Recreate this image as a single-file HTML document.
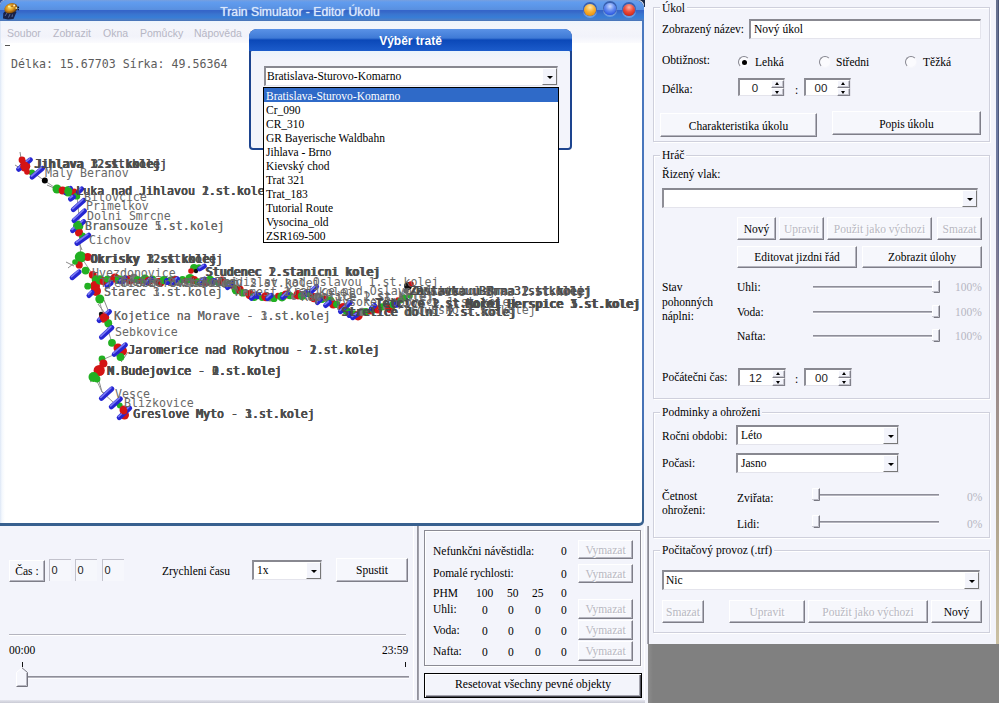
<!DOCTYPE html>
<html><head><meta charset="utf-8"><title>Train Simulator - Editor Úkolu</title>
<style>
*{box-sizing:border-box;margin:0;padding:0}
html,body{width:999px;height:703px;overflow:hidden;background:#f3f4fb}
body{position:relative;font-family:"Liberation Serif",serif;font-size:11.5px;color:#000}
.a{position:absolute;white-space:nowrap}
.t{position:absolute;white-space:nowrap;line-height:14px;height:14px}
.sans{font-family:"Liberation Sans",sans-serif}
.mono{font-family:"DejaVu Sans Mono","Liberation Mono",monospace}
.fs{position:absolute;border:1px solid #cfd0dc;box-shadow:inset 1px 1px 0 #fff, 1px 1px 0 #fff}
.lg{position:absolute;background:#f3f4fb;padding:0 2px;line-height:14px;height:14px;white-space:nowrap}
.btn{position:absolute;border-right:1px solid #7e7e88;border-bottom:1px solid #7e7e88;border-top:1px solid #fff;border-left:1px solid #fff;box-shadow:inset -1px -1px 0 #b4b4be;background:#f6f7fc;text-align:center;white-space:nowrap}
.btn.dis{color:#b8b8c2;text-shadow:1px 1px 0 #fff}
.inp{position:absolute;background:#fff;border-top:2px solid #888890;border-left:2px solid #8e8e96;border-right:1px solid #e4e4ec;border-bottom:1px solid #e4e4ec;white-space:nowrap}
.dd{position:absolute;width:15px;background:#f3f4fb;border-top:1px solid #fff;border-left:1px solid #fff;border-right:1px solid #777;border-bottom:1px solid #777}
.dd:after{content:"";position:absolute;left:4px;top:7px;border:3px solid transparent;border-top:3px solid #000;border-bottom:none}
.gray{color:#b6b6c2}
.lb{font-family:"DejaVu Sans Mono","Liberation Mono",monospace;font-size:11.6px;line-height:14px;color:#686868}
.lb.bb{color:#4c4c4c;text-shadow:0.6px 0 0 #4c4c4c}
</style></head><body>
<div class="a" style="left:644px;top:0;width:355px;height:644px;background:#f3f4fb"></div>
<div class="a" style="left:648px;top:644px;width:351px;height:59px;background:linear-gradient(90deg,#8c8c8c 0,#808080 5px)"></div>
<div class="a" style="left:996px;top:0;width:3px;height:644px;background:linear-gradient(#66708e,#6c7aa2 20%,#807c94 42%,#96868c 55%,#b0a48e 80%,#cbc1a4)"></div>
<div class="a" style="left:998px;top:0;width:1px;height:300px;background:linear-gradient(#4a5474,#4e5a80 60%,rgba(120,110,130,0))"></div>
<div class="fs" style="left:653px;top:7px;width:337px;height:135px"></div>
<div class="lg" style="left:660px;top:1px">Úkol</div>
<div class="t " style="left:662px;top:22px;">Zobrazený název:</div>
<div class="inp" style="left:749px;top:19px;width:232px;height:20px;line-height:17px;padding-left:3px;">Nový úkol</div>
<div class="t " style="left:662px;top:53px;">Obtižnost:</div>
<div class="a" style="left:738px;top:56px;width:12px;height:12px;border-radius:50%;background:#fbfbfe;border:1px solid #85858f;border-right-color:#f6f6fb;border-bottom-color:#f6f6fb;transform:rotate(0deg)"></div>
<div class="a" style="left:741.5px;top:59.5px;width:5px;height:5px;border-radius:50%;background:#000"></div>
<div class="t " style="left:755px;top:55px;">Lehká</div>
<div class="a" style="left:819px;top:56px;width:12px;height:12px;border-radius:50%;background:#fbfbfe;border:1px solid #85858f;border-right-color:#f6f6fb;border-bottom-color:#f6f6fb;transform:rotate(0deg)"></div>
<div class="t " style="left:836px;top:55px;">Středni</div>
<div class="a" style="left:905px;top:56px;width:12px;height:12px;border-radius:50%;background:#fbfbfe;border:1px solid #85858f;border-right-color:#f6f6fb;border-bottom-color:#f6f6fb;transform:rotate(0deg)"></div>
<div class="t " style="left:923px;top:55px;">Těžká</div>
<div class="t " style="left:662px;top:82px;">Délka:</div>
<div class="inp sans" style="left:738px;top:78px;width:47px;height:18px;line-height:16px;text-align:center;padding-right:14px;font-size:11.5px;color:#222">0</div>
<div class="a" style="left:771px;top:80px;width:13px;height:8px;background:#f3f4fb;border-right:1px solid #80808a;border-bottom:1px solid #80808a;border-top:1px solid #fff;border-left:1px solid #fff;box-shadow:inset -1px -1px 0 #c4c4cc"></div>
<div class="a" style="left:775px;top:82px;border:2.5px solid transparent;border-bottom:3px solid #000;border-top:none"></div>
<div class="a" style="left:771px;top:88px;width:13px;height:8px;background:#f3f4fb;border-right:1px solid #80808a;border-bottom:1px solid #80808a;border-top:1px solid #fff;border-left:1px solid #fff;box-shadow:inset -1px -1px 0 #c4c4cc"></div>
<div class="a" style="left:775px;top:91px;border:2.5px solid transparent;border-top:3px solid #000;border-bottom:none"></div>
<div class="t " style="left:795px;top:83px;">:</div>
<div class="inp sans" style="left:804px;top:78px;width:47px;height:18px;line-height:16px;text-align:center;padding-right:14px;font-size:11.5px;color:#222">00</div>
<div class="a" style="left:837px;top:80px;width:13px;height:8px;background:#f3f4fb;border-right:1px solid #80808a;border-bottom:1px solid #80808a;border-top:1px solid #fff;border-left:1px solid #fff;box-shadow:inset -1px -1px 0 #c4c4cc"></div>
<div class="a" style="left:841px;top:82px;border:2.5px solid transparent;border-bottom:3px solid #000;border-top:none"></div>
<div class="a" style="left:837px;top:88px;width:13px;height:8px;background:#f3f4fb;border-right:1px solid #80808a;border-bottom:1px solid #80808a;border-top:1px solid #fff;border-left:1px solid #fff;box-shadow:inset -1px -1px 0 #c4c4cc"></div>
<div class="a" style="left:841px;top:91px;border:2.5px solid transparent;border-top:3px solid #000;border-bottom:none"></div>
<div class="btn" style="left:660px;top:113px;width:157px;height:24px;line-height:23px;line-height:24px;">Charakteristika úkolu</div>
<div class="btn" style="left:832px;top:111px;width:149px;height:24px;line-height:23px;line-height:24px;">Popis úkolu</div>
<div class="fs" style="left:653px;top:155px;width:337px;height:244px"></div>
<div class="lg" style="left:660px;top:148px">Hráč</div>
<div class="t " style="left:662px;top:167px;">Řizený vlak:</div>
<div class="inp" style="left:662px;top:188px;width:316px;height:20px;line-height:17px;padding-left:3px;"></div>
<div class="dd" style="left:962px;top:190px;height:17px"></div>
<div class="btn" style="left:737px;top:217px;width:39px;height:23px;line-height:22px;">Nový</div>
<div class="btn dis" style="left:779px;top:217px;width:45px;height:23px;line-height:22px;">Upravit</div>
<div class="btn dis" style="left:827px;top:217px;width:105px;height:23px;line-height:22px;">Použit jako výchozi</div>
<div class="btn dis" style="left:937px;top:217px;width:45px;height:23px;line-height:22px;">Smazat</div>
<div class="btn" style="left:737px;top:246px;width:120px;height:22px;line-height:21px;">Editovat jizdni řád</div>
<div class="btn" style="left:862px;top:246px;width:120px;height:22px;line-height:21px;">Zobrazit úlohy</div>
<div class="t " style="left:662px;top:280px;">Stav</div>
<div class="t " style="left:662px;top:295px;">pohonných</div>
<div class="t " style="left:662px;top:309px;">náplni:</div>
<div class="t " style="left:737px;top:280px;">Uhli:</div>
<div class="a" style="left:813px;top:286px;width:120px;height:2px;background:linear-gradient(#8e8e98 0,#8e8e98 1px,#b4b4be 1px);border-bottom:1px solid #fdfdff;box-sizing:content-box"></div>
<svg class="a" style="left:932px;top:280px" width="9" height="15" viewBox="0 0 9 15"><path d="M0.5 0.5 H7.5 V12.5 H2 L0.5 11 Z" fill="#f5f6fc"/><path d="M0.5 11 V0.5 H7.5" fill="none" stroke="#fff"/><path d="M6.5 1 V11.5 H2" fill="none" stroke="#b8b8c2"/><path d="M7.5 0.5 V12.5 H2 L0.8 11.3" fill="none" stroke="#787882"/></svg>
<div class="t gray" style="left:955px;top:280px;">100%</div>
<div class="t " style="left:737px;top:305px;">Voda:</div>
<div class="a" style="left:813px;top:311px;width:120px;height:2px;background:linear-gradient(#8e8e98 0,#8e8e98 1px,#b4b4be 1px);border-bottom:1px solid #fdfdff;box-sizing:content-box"></div>
<svg class="a" style="left:932px;top:305px" width="9" height="15" viewBox="0 0 9 15"><path d="M0.5 0.5 H7.5 V12.5 H2 L0.5 11 Z" fill="#f5f6fc"/><path d="M0.5 11 V0.5 H7.5" fill="none" stroke="#fff"/><path d="M6.5 1 V11.5 H2" fill="none" stroke="#b8b8c2"/><path d="M7.5 0.5 V12.5 H2 L0.8 11.3" fill="none" stroke="#787882"/></svg>
<div class="t gray" style="left:955px;top:305px;">100%</div>
<div class="t " style="left:737px;top:329px;">Nafta:</div>
<div class="a" style="left:813px;top:335px;width:120px;height:2px;background:linear-gradient(#8e8e98 0,#8e8e98 1px,#b4b4be 1px);border-bottom:1px solid #fdfdff;box-sizing:content-box"></div>
<svg class="a" style="left:932px;top:329px" width="9" height="15" viewBox="0 0 9 15"><path d="M0.5 0.5 H7.5 V12.5 H2 L0.5 11 Z" fill="#f5f6fc"/><path d="M0.5 11 V0.5 H7.5" fill="none" stroke="#fff"/><path d="M6.5 1 V11.5 H2" fill="none" stroke="#b8b8c2"/><path d="M7.5 0.5 V12.5 H2 L0.8 11.3" fill="none" stroke="#787882"/></svg>
<div class="t gray" style="left:955px;top:329px;">100%</div>
<div class="t " style="left:662px;top:370px;">Počátečni čas:</div>
<div class="inp sans" style="left:738px;top:368px;width:48px;height:18px;line-height:16px;text-align:center;padding-right:14px;font-size:11.5px;color:#222">12</div>
<div class="a" style="left:772px;top:370px;width:13px;height:8px;background:#f3f4fb;border-right:1px solid #80808a;border-bottom:1px solid #80808a;border-top:1px solid #fff;border-left:1px solid #fff;box-shadow:inset -1px -1px 0 #c4c4cc"></div>
<div class="a" style="left:776px;top:372px;border:2.5px solid transparent;border-bottom:3px solid #000;border-top:none"></div>
<div class="a" style="left:772px;top:378px;width:13px;height:8px;background:#f3f4fb;border-right:1px solid #80808a;border-bottom:1px solid #80808a;border-top:1px solid #fff;border-left:1px solid #fff;box-shadow:inset -1px -1px 0 #c4c4cc"></div>
<div class="a" style="left:776px;top:381px;border:2.5px solid transparent;border-top:3px solid #000;border-bottom:none"></div>
<div class="t " style="left:795px;top:372px;">:</div>
<div class="inp sans" style="left:804px;top:368px;width:48px;height:18px;line-height:16px;text-align:center;padding-right:14px;font-size:11.5px;color:#222">00</div>
<div class="a" style="left:838px;top:370px;width:13px;height:8px;background:#f3f4fb;border-right:1px solid #80808a;border-bottom:1px solid #80808a;border-top:1px solid #fff;border-left:1px solid #fff;box-shadow:inset -1px -1px 0 #c4c4cc"></div>
<div class="a" style="left:842px;top:372px;border:2.5px solid transparent;border-bottom:3px solid #000;border-top:none"></div>
<div class="a" style="left:838px;top:378px;width:13px;height:8px;background:#f3f4fb;border-right:1px solid #80808a;border-bottom:1px solid #80808a;border-top:1px solid #fff;border-left:1px solid #fff;box-shadow:inset -1px -1px 0 #c4c4cc"></div>
<div class="a" style="left:842px;top:381px;border:2.5px solid transparent;border-top:3px solid #000;border-bottom:none"></div>
<div class="fs" style="left:653px;top:412px;width:337px;height:126px"></div>
<div class="lg" style="left:660px;top:405px">Podminky a ohroženi</div>
<div class="t " style="left:662px;top:429px;">Ročni obdobi:</div>
<div class="inp" style="left:736px;top:425px;width:163px;height:20px;line-height:17px;padding-left:3px;">Léto</div>
<div class="dd" style="left:883px;top:427px;height:17px"></div>
<div class="t " style="left:662px;top:456px;">Počasi:</div>
<div class="inp" style="left:736px;top:453px;width:163px;height:20px;line-height:17px;padding-left:3px;">Jasno</div>
<div class="dd" style="left:883px;top:455px;height:17px"></div>
<div class="t " style="left:662px;top:489px;">Četnost</div>
<div class="t " style="left:662px;top:503px;">ohroženi:</div>
<div class="t " style="left:737px;top:491px;">Zviřata:</div>
<div class="a" style="left:819px;top:494px;width:120px;height:2px;background:linear-gradient(#8e8e98 0,#8e8e98 1px,#b4b4be 1px);border-bottom:1px solid #fdfdff;box-sizing:content-box"></div>
<svg class="a" style="left:812px;top:488px" width="9" height="15" viewBox="0 0 9 15"><path d="M0.5 0.5 H7.5 V12.5 H2 L0.5 11 Z" fill="#f5f6fc"/><path d="M0.5 11 V0.5 H7.5" fill="none" stroke="#fff"/><path d="M6.5 1 V11.5 H2" fill="none" stroke="#b8b8c2"/><path d="M7.5 0.5 V12.5 H2 L0.8 11.3" fill="none" stroke="#787882"/></svg>
<div class="t gray" style="left:967px;top:490px;">0%</div>
<div class="t " style="left:737px;top:517px;">Lidi:</div>
<div class="a" style="left:819px;top:521px;width:120px;height:2px;background:linear-gradient(#8e8e98 0,#8e8e98 1px,#b4b4be 1px);border-bottom:1px solid #fdfdff;box-sizing:content-box"></div>
<svg class="a" style="left:812px;top:515px" width="9" height="15" viewBox="0 0 9 15"><path d="M0.5 0.5 H7.5 V12.5 H2 L0.5 11 Z" fill="#f5f6fc"/><path d="M0.5 11 V0.5 H7.5" fill="none" stroke="#fff"/><path d="M6.5 1 V11.5 H2" fill="none" stroke="#b8b8c2"/><path d="M7.5 0.5 V12.5 H2 L0.8 11.3" fill="none" stroke="#787882"/></svg>
<div class="t gray" style="left:967px;top:517px;">0%</div>
<div class="fs" style="left:653px;top:550px;width:337px;height:83px"></div>
<div class="lg" style="left:660px;top:543px">Počitačový provoz (.trf)</div>
<div class="inp" style="left:662px;top:570px;width:318px;height:20px;line-height:17px;padding-left:2px;">Nic</div>
<div class="dd" style="left:964px;top:572px;height:17px"></div>
<div class="btn dis" style="left:662px;top:600px;width:42px;height:23px;line-height:22px;">Smazat</div>
<div class="btn dis" style="left:729px;top:600px;width:76px;height:23px;line-height:22px;">Upravit</div>
<div class="btn dis" style="left:808px;top:600px;width:120px;height:23px;line-height:22px;">Použit jako výchozi</div>
<div class="btn" style="left:931px;top:600px;width:51px;height:23px;line-height:22px;">Nový</div>
<div class="a" style="left:0;top:525px;width:644px;height:178px;background:#f3f4fb"></div>
<div class="a" style="left:413px;top:526px;width:1px;height:177px;background:#fff"></div>
<div class="a" style="left:417px;top:526px;width:2px;height:177px;background:linear-gradient(90deg,#8a8a94,#a8a8b2)"></div>
<div class="a" style="left:647px;top:526px;width:2px;height:118px;background:linear-gradient(90deg,#b4b4be,#7c7c86)"></div>
<div class="a" style="left:644px;top:526px;width:1px;height:177px;background:#fff"></div>
<div class="btn" style="left:9px;top:560px;width:36px;height:22px;line-height:21px;">Čas :</div>
<div class="a sans" style="left:49px;top:559px;width:22px;height:22px;border-top:1px solid #c2c2cc;border-left:1px solid #c2c2cc;background:#f6f7fc;line-height:21px;padding-left:1.5px;font-size:11px;color:#222">0</div>
<div class="a sans" style="left:75px;top:559px;width:22px;height:22px;border-top:1px solid #c2c2cc;border-left:1px solid #c2c2cc;background:#f6f7fc;line-height:21px;padding-left:1.5px;font-size:11px;color:#222">0</div>
<div class="a sans" style="left:102px;top:559px;width:22px;height:22px;border-top:1px solid #c2c2cc;border-left:1px solid #c2c2cc;background:#f6f7fc;line-height:21px;padding-left:1.5px;font-size:11px;color:#222">0</div>
<div class="t " style="left:162px;top:564px;">Zrychleni času</div>
<div class="inp" style="left:252px;top:560px;width:70px;height:20px;line-height:17px;padding-left:3px;">1x</div>
<div class="dd" style="left:306px;top:562px;height:17px"></div>
<div class="btn" style="left:336px;top:558px;width:72px;height:24px;line-height:23px;">Spustit</div>
<div class="a" style="left:9px;top:634px;width:397px;height:1px;background:#b4b4be"></div><div class="a" style="left:9px;top:635px;width:397px;height:1px;background:#fff"></div>
<div class="t " style="left:9px;top:643px;">00:00</div>
<div class="t " style="left:382px;top:643px;">23:59</div>
<div class="a" style="left:22px;top:662px;width:1px;height:5px;background:#111"></div>
<div class="a" style="left:405px;top:662px;width:1px;height:5px;background:#111"></div>
<div class="a" style="left:22px;top:676px;width:387px;height:2px;background:linear-gradient(#8e8e98 0,#8e8e98 1px,#b4b4be 1px);border-bottom:1px solid #fdfdff;box-sizing:content-box"></div>
<svg class="a" style="left:16px;top:667px" width="13" height="21" viewBox="0 0 13 21"><path d="M0.5 19.5 V5.5 L6 0.8 L11.5 5.5 V19.5 Z" fill="#f5f6fc"/><path d="M0.5 19.5 V5.5 L6 0.8" fill="none" stroke="#fff"/><path d="M10.5 6 V18.5 H1.5" fill="none" stroke="#b8b8c2"/><path d="M6 0.8 L11.5 5.5 V19.5 H0.5" fill="none" stroke="#74747e"/></svg>
<div class="a" style="left:0;top:700px;width:645px;height:3px;background:linear-gradient(#e4e5ee,#c9cad4)"></div>
<div class="a" style="left:424px;top:530px;width:217px;height:136px;border:1px solid #8a8a94;box-shadow:inset 1px 1px 0 #fff,1px 1px 0 #fff"></div>
<div class="t " style="left:433px;top:544px;">Nefunkčni návěstidla:</div>
<div class="t " style="left:561px;top:544px;">0</div>
<div class="btn dis" style="left:578px;top:540px;width:55px;height:19px;line-height:18px;">Vymazat</div>
<div class="t " style="left:433px;top:566px;">Pomalé rychlosti:</div>
<div class="t " style="left:561px;top:567px;">0</div>
<div class="btn dis" style="left:578px;top:564px;width:55px;height:19px;line-height:18px;">Vymazat</div>
<div class="t " style="left:433px;top:586px;">PHM</div>
<div class="t " style="left:476px;top:586px;">100</div>
<div class="t " style="left:507px;top:586px;">50</div>
<div class="t " style="left:532px;top:586px;">25</div>
<div class="t " style="left:561px;top:586px;">0</div>
<div class="t " style="left:433px;top:602px;">Uhli:</div>
<div class="t " style="left:482px;top:603px;">0</div>
<div class="t " style="left:508px;top:603px;">0</div>
<div class="t " style="left:535px;top:603px;">0</div>
<div class="t " style="left:561px;top:603px;">0</div>
<div class="btn dis" style="left:578px;top:599px;width:55px;height:20px;line-height:19px;">Vymazat</div>
<div class="t " style="left:433px;top:623px;">Voda:</div>
<div class="t " style="left:482px;top:624px;">0</div>
<div class="t " style="left:508px;top:624px;">0</div>
<div class="t " style="left:535px;top:624px;">0</div>
<div class="t " style="left:561px;top:624px;">0</div>
<div class="btn dis" style="left:578px;top:620px;width:55px;height:20px;line-height:19px;">Vymazat</div>
<div class="t " style="left:433px;top:644px;">Nafta:</div>
<div class="t " style="left:482px;top:645px;">0</div>
<div class="t " style="left:508px;top:645px;">0</div>
<div class="t " style="left:535px;top:645px;">0</div>
<div class="t " style="left:561px;top:645px;">0</div>
<div class="btn dis" style="left:578px;top:641px;width:55px;height:20px;line-height:19px;">Vymazat</div>
<div class="a" style="left:424px;top:673px;width:218px;height:25px;border:1px solid #000;box-shadow:inset 1px 1px 0 #fff,inset -1px -1px 0 #4c4c56,inset -2px -2px 0 #a4a4ae;text-align:center;line-height:21px;font-size:11.7px">Resetovat všechny pevné objekty</div>
<div class="a" style="left:0;top:0;width:644px;height:526px;background:linear-gradient(#4a78c0,#4672b6 80%,#38608f 97%);border-radius:6px 8px 5px 0"></div>
<div class="a" style="left:0;top:43px;width:5px;height:480px;background:linear-gradient(90deg,#dde7f6,#f4f8fd 40%,#fff);z-index:1"></div>
<div class="a" style="left:0;top:20px;width:1px;height:23px;background:#dfe8f6"></div>
<div class="a" style="left:0;top:0;width:644px;height:21px;border-radius:7px 9px 0 0;background:linear-gradient(#789fdd 0,#619cee 2px,#5c96e8 6px,#5990e0 9.5px,#3565c9 10.5px,#3669c9 12px,#3a74cf 14px,#387dd6 17.5px,#4a7ec8 19.5px,#4a72b4 21px)"></div>
<div class="a sans" style="left:0;top:3.6px;width:600px;text-align:center;color:#dbe8fc;font-size:12.2px;line-height:16px;text-shadow:0 0 1px #dbe8fc">Train Simulator - Editor Úkolu</div>
<svg class="a" style="left:0;top:0" width="24" height="21" viewBox="0 0 24 21"><defs><radialGradient id="ig" cx="45%" cy="40%" r="60%"><stop offset="0" stop-color="#fae070"/><stop offset="0.45" stop-color="#e09a20"/><stop offset="0.85" stop-color="#8a5410"/><stop offset="1" stop-color="#3a2a18"/></radialGradient></defs><path d="M3 18.5 L3.3 13 L6 10.5 L13 10 L16.5 12 L15 15.5 L13.5 19 L8 19.5 Z" fill="#16183a" opacity=".9"/><path d="M5 16 L7 13 M8.5 17.5 L10 14 M12 17 L12.5 14.5" stroke="#6a7aa8" stroke-width=".8"/><ellipse cx="11" cy="8.3" rx="6.8" ry="5" transform="rotate(-18 11 8.3)" fill="url(#ig)"/><circle cx="9" cy="6.5" r="1.1" fill="#fff3a0"/><circle cx="14.2" cy="5.6" r="1" fill="#fff0c8"/><circle cx="16.3" cy="8" r=".9" fill="#f4e890"/><circle cx="18.3" cy="7.4" r=".8" fill="#101020"/><circle cx="18.2" cy="9.6" r=".8" fill="#101020"/><circle cx="12" cy="6.2" r=".7" fill="#7a3a10"/></svg>
<div class="a" style="left:584px;top:3.8000000000000007px;width:12px;height:12px;border-radius:50%;background:radial-gradient(circle at 50% 28%,#ffe6a8 0,#f8b030 45%,#e89010 80%);box-shadow:0 -1px 0 1px rgba(24,50,130,.55),0 1px 0 1px rgba(200,220,255,.35)"></div>
<div class="a" style="left:604px;top:3.3000000000000007px;width:12px;height:12px;border-radius:50%;background:radial-gradient(circle at 50% 28%,#c8d8fc 0,#6088f0 45%,#2c58e4 80%);box-shadow:0 -1px 0 1px rgba(24,50,130,.55),0 1px 0 1px rgba(200,220,255,.35)"></div>
<div class="a" style="left:623px;top:3.8000000000000007px;width:12px;height:12px;border-radius:50%;background:radial-gradient(circle at 50% 28%,#ffb0a0 0,#ec4a38 45%,#d02818 80%);box-shadow:0 -1px 0 1px rgba(24,50,130,.55),0 1px 0 1px rgba(200,220,255,.35)"></div>
<svg class="a" style="left:638px;top:0" width="7" height="7" viewBox="0 0 7 7"><path d="M0 0 H7 V7 H6 A6 6 0 0 0 0 0Z" fill="#1a2846"/></svg>
<svg class="a" style="left:0;top:0" width="5" height="5" viewBox="0 0 5 5"><path d="M0 0 H5 A5 5 0 0 0 0 5Z" fill="#2c4f9c"/></svg>
<div class="a" style="left:1px;top:21px;width:641px;height:22px;background:linear-gradient(#eef4fc,#f4f5fb 30%,#f2f3fa 70%,#fbfbfe)"></div>
<div class="a sans" style="left:7px;top:25.6px;font-size:10.5px;line-height:14px;color:#b6b6c4">Soubor</div>
<div class="a sans" style="left:53px;top:25.6px;font-size:10.5px;line-height:14px;color:#b6b6c4">Zobrazit</div>
<div class="a sans" style="left:103px;top:25.6px;font-size:10.5px;line-height:14px;color:#b6b6c4">Okna</div>
<div class="a sans" style="left:140px;top:25.6px;font-size:10.5px;line-height:14px;color:#b6b6c4">Pomůcky</div>
<div class="a sans" style="left:194px;top:25.6px;font-size:10.5px;line-height:14px;color:#b6b6c4">Nápověda</div>
<div class="a" style="left:1px;top:43px;width:641px;height:480px;background:#fff;border-radius:0 0 3px 0"></div>
<div class="a" style="left:3px;top:45px;width:7px;height:1px;background:#555"></div>
<div class="a mono" style="left:11px;top:57px;font-size:11.6px;line-height:14px;color:#5c5c5c;letter-spacing:0px">Délka: 15.67703 Sírka: 49.56364</div>
<div class="a" style="left:0;top:0;width:642px;height:523px;overflow:hidden">
<svg class="a" style="left:0;top:43px" width="641" height="480" viewBox="0 43 641 480">
<polyline fill="none" stroke="#9a9a9a" stroke-width="1" points="24,166 45,181 57,189 77,196 79,216 79,232 81,257 93,275 96,290 104,317 112,343 120,352 102,360 95,377 102,392 124,412"/>
<polyline fill="none" stroke="#9a9a9a" stroke-width="1" points="100,280 130,279 160,281 190,280 222,282 230,285 246,294 266,298 282,296 310,295 330,301 350,313 358,315 370,310 390,307 404,300"/>
<line x1="47" y1="185" x2="54" y2="188" stroke="#8a8a8a" stroke-width="1"/>
<line x1="20" y1="152" x2="21" y2="158" stroke="#8a8a8a" stroke-width="1"/>
<line x1="15" y1="165" x2="20" y2="168" stroke="#8a8a8a" stroke-width="1"/>
<line x1="78" y1="240" x2="82" y2="250" stroke="#8a8a8a" stroke-width="1"/>
<line x1="66" y1="262" x2="74" y2="266" stroke="#8a8a8a" stroke-width="1"/>
<line x1="68" y1="268" x2="73" y2="264" stroke="#8a8a8a" stroke-width="1"/>
<line x1="99" y1="381" x2="102" y2="392" stroke="#8a8a8a" stroke-width="1"/>
<line x1="102" y1="392" x2="106" y2="394" stroke="#8a8a8a" stroke-width="1"/>
<line x1="90" y1="382" x2="96" y2="378" stroke="#8a8a8a" stroke-width="1"/>
<line x1="113" y1="352" x2="122" y2="362" stroke="#8a8a8a" stroke-width="1"/>
<line x1="124" y1="358" x2="128" y2="352" stroke="#8a8a8a" stroke-width="1"/>
<line x1="104" y1="300" x2="108" y2="310" stroke="#8a8a8a" stroke-width="1"/>
<line x1="98" y1="304" x2="104" y2="312" stroke="#8a8a8a" stroke-width="1"/>
<circle cx="24.9" cy="166.3" r="5.4" fill="#d41414"/>
<circle cx="22.0" cy="160.0" r="3.4" fill="#d41414"/>
<circle cx="32.0" cy="172.7" r="3.1" fill="#22b022"/>
<circle cx="27.0" cy="172.0" r="2.8" fill="#d41414"/>
<circle cx="57.0" cy="189.0" r="4.5" fill="#22b022"/>
<circle cx="62.6" cy="190.5" r="3.9" fill="#d41414"/>
<circle cx="68.3" cy="191.2" r="5.2" fill="#22b022"/>
<circle cx="74.0" cy="192.0" r="3.4" fill="#d41414"/>
<circle cx="76.8" cy="196.2" r="3.4" fill="#22b022"/>
<circle cx="78.2" cy="226.0" r="5.2" fill="#22b022"/>
<circle cx="79.0" cy="232.5" r="4.0" fill="#d41414"/>
<circle cx="82.5" cy="236.0" r="3.4" fill="#22b022"/>
<circle cx="80.6" cy="257.0" r="5.8" fill="#22b022"/>
<circle cx="87.7" cy="257.0" r="3.9" fill="#d41414"/>
<circle cx="79.2" cy="264.9" r="3.6" fill="#d41414"/>
<circle cx="75.0" cy="262.0" r="2.8" fill="#22b022"/>
<circle cx="85.6" cy="270.6" r="3.9" fill="#22b022"/>
<circle cx="92.7" cy="274.8" r="3.9" fill="#d41414"/>
<circle cx="96.2" cy="279.8" r="4.5" fill="#22b022"/>
<circle cx="95.0" cy="286.0" r="5.0" fill="#d41414"/>
<circle cx="96.0" cy="291.0" r="5.0" fill="#d41414"/>
<circle cx="99.8" cy="299.0" r="4.5" fill="#22b022"/>
<circle cx="87.7" cy="286.2" r="3.4" fill="#22b022"/>
<circle cx="104.0" cy="317.5" r="5.2" fill="#d41414"/>
<circle cx="108.3" cy="323.2" r="3.9" fill="#22b022"/>
<circle cx="101.0" cy="314.0" r="2.2" fill="#111"/>
<circle cx="112.0" cy="342.8" r="3.9" fill="#22b022"/>
<circle cx="118.0" cy="348.0" r="4.5" fill="#d41414"/>
<circle cx="122.0" cy="351.0" r="5.0" fill="#d41414"/>
<circle cx="120.5" cy="357.0" r="3.9" fill="#22b022"/>
<circle cx="102.0" cy="359.0" r="3.4" fill="#22b022"/>
<circle cx="103.4" cy="363.4" r="4.0" fill="#d41414"/>
<circle cx="99.2" cy="370.5" r="5.6" fill="#d41414"/>
<circle cx="93.5" cy="377.0" r="5.0" fill="#22b022"/>
<circle cx="97.0" cy="379.0" r="3.4" fill="#22b022"/>
<circle cx="119.8" cy="405.4" r="2.9" fill="#22b022"/>
<circle cx="124.0" cy="410.0" r="4.5" fill="#d41414"/>
<circle cx="124.5" cy="415.0" r="4.5" fill="#d41414"/>
<circle cx="194.0" cy="268.0" r="3.9" fill="#22b022"/>
<circle cx="191.0" cy="271.0" r="2.8" fill="#d41414"/>
<circle cx="196.0" cy="271.0" r="2.2" fill="#111"/>
<circle cx="199.0" cy="267.0" r="2.8" fill="#22b022"/>
<circle cx="408.0" cy="286.0" r="3.9" fill="#111"/>
<circle cx="411.0" cy="284.0" r="2.8" fill="#d41414"/>
<circle cx="406.0" cy="291.0" r="2.8" fill="#666"/>
<circle cx="404.0" cy="298.0" r="3.4" fill="#22b022"/>
<circle cx="398.0" cy="300.0" r="2.8" fill="#d41414"/>
<circle cx="410.0" cy="296.0" r="2.8" fill="#22b022"/>
<circle cx="100.0" cy="280.0" r="4.7" fill="#22b022"/>
<circle cx="103.8" cy="281.3" r="4.1" fill="#d41414"/>
<circle cx="107.5" cy="279.1" r="3.6" fill="#22b022"/>
<circle cx="111.2" cy="280.3" r="3.0" fill="#7a7a7a"/>
<circle cx="115.0" cy="278.1" r="4.7" fill="#d41414"/>
<circle cx="118.8" cy="279.4" r="4.1" fill="#22b022"/>
<circle cx="122.5" cy="280.6" r="3.6" fill="#2626d2"/>
<circle cx="126.2" cy="278.4" r="3.0" fill="#22b022"/>
<circle cx="130.0" cy="279.7" r="4.7" fill="#d41414"/>
<circle cx="133.8" cy="277.9" r="4.1" fill="#7a7a7a"/>
<circle cx="137.5" cy="279.5" r="3.6" fill="#22b022"/>
<circle cx="141.2" cy="281.1" r="3.0" fill="#d41414"/>
<circle cx="145.0" cy="279.3" r="4.7" fill="#22b022"/>
<circle cx="148.8" cy="280.9" r="4.1" fill="#d41414"/>
<circle cx="152.5" cy="279.1" r="3.6" fill="#22b022"/>
<circle cx="156.2" cy="280.8" r="3.0" fill="#7a7a7a"/>
<circle cx="160.0" cy="282.4" r="4.7" fill="#d41414"/>
<circle cx="163.8" cy="280.2" r="4.1" fill="#22b022"/>
<circle cx="167.5" cy="281.4" r="3.6" fill="#2626d2"/>
<circle cx="171.2" cy="279.2" r="3.0" fill="#22b022"/>
<circle cx="175.0" cy="280.5" r="4.7" fill="#d41414"/>
<circle cx="178.8" cy="281.8" r="4.1" fill="#7a7a7a"/>
<circle cx="182.5" cy="279.6" r="3.6" fill="#22b022"/>
<circle cx="186.2" cy="280.8" r="3.0" fill="#d41414"/>
<circle cx="190.0" cy="278.6" r="4.7" fill="#22b022"/>
<circle cx="194.0" cy="280.2" r="4.1" fill="#d41414"/>
<circle cx="198.0" cy="281.9" r="3.6" fill="#22b022"/>
<circle cx="202.0" cy="280.1" r="3.0" fill="#7a7a7a"/>
<circle cx="206.0" cy="281.7" r="4.7" fill="#d41414"/>
<circle cx="210.0" cy="279.9" r="4.1" fill="#22b022"/>
<circle cx="214.0" cy="281.5" r="3.6" fill="#2626d2"/>
<circle cx="218.0" cy="283.1" r="3.0" fill="#22b022"/>
<circle cx="222.0" cy="281.3" r="4.7" fill="#d41414"/>
<circle cx="226.0" cy="284.2" r="4.1" fill="#7a7a7a"/>
<circle cx="230.0" cy="283.6" r="3.6" fill="#22b022"/>
<circle cx="233.2" cy="286.8" r="3.0" fill="#d41414"/>
<circle cx="236.4" cy="290.0" r="4.7" fill="#22b022"/>
<circle cx="239.6" cy="289.7" r="4.1" fill="#d41414"/>
<circle cx="242.8" cy="292.9" r="3.6" fill="#22b022"/>
<circle cx="246.0" cy="292.6" r="3.0" fill="#7a7a7a"/>
<circle cx="250.0" cy="294.8" r="4.7" fill="#d41414"/>
<circle cx="254.0" cy="297.0" r="4.1" fill="#22b022"/>
<circle cx="258.0" cy="295.7" r="3.6" fill="#2626d2"/>
<circle cx="262.0" cy="297.9" r="3.0" fill="#22b022"/>
<circle cx="266.0" cy="296.6" r="4.7" fill="#d41414"/>
<circle cx="270.0" cy="297.5" r="4.1" fill="#7a7a7a"/>
<circle cx="274.0" cy="298.4" r="3.6" fill="#22b022"/>
<circle cx="278.0" cy="295.8" r="3.0" fill="#d41414"/>
<circle cx="282.0" cy="296.7" r="4.7" fill="#22b022"/>
<circle cx="286.0" cy="294.5" r="4.1" fill="#d41414"/>
<circle cx="290.0" cy="295.7" r="3.6" fill="#22b022"/>
<circle cx="294.0" cy="297.0" r="3.0" fill="#7a7a7a"/>
<circle cx="298.0" cy="294.7" r="4.7" fill="#d41414"/>
<circle cx="302.0" cy="296.0" r="4.1" fill="#22b022"/>
<circle cx="306.0" cy="293.7" r="3.6" fill="#2626d2"/>
<circle cx="310.0" cy="295.0" r="3.0" fill="#22b022"/>
<circle cx="314.0" cy="297.6" r="4.7" fill="#d41414"/>
<circle cx="318.0" cy="296.7" r="4.1" fill="#7a7a7a"/>
<circle cx="322.0" cy="299.3" r="3.6" fill="#22b022"/>
<circle cx="326.0" cy="298.4" r="3.0" fill="#d41414"/>
<circle cx="330.0" cy="301.0" r="4.7" fill="#22b022"/>
<circle cx="333.3" cy="304.4" r="4.1" fill="#d41414"/>
<circle cx="336.7" cy="304.3" r="3.6" fill="#22b022"/>
<circle cx="340.0" cy="307.7" r="3.0" fill="#7a7a7a"/>
<circle cx="343.3" cy="307.6" r="4.7" fill="#d41414"/>
<circle cx="346.7" cy="311.0" r="4.1" fill="#22b022"/>
<circle cx="350.0" cy="314.4" r="3.6" fill="#2626d2"/>
<circle cx="354.0" cy="313.3" r="3.0" fill="#22b022"/>
<circle cx="358.0" cy="315.7" r="4.7" fill="#d41414"/>
<circle cx="362.0" cy="311.9" r="4.1" fill="#7a7a7a"/>
<circle cx="366.0" cy="311.7" r="3.6" fill="#22b022"/>
<circle cx="370.0" cy="311.4" r="3.0" fill="#d41414"/>
<circle cx="374.0" cy="308.7" r="4.7" fill="#22b022"/>
<circle cx="378.0" cy="309.5" r="4.1" fill="#d41414"/>
<circle cx="382.0" cy="306.8" r="3.6" fill="#22b022"/>
<circle cx="386.0" cy="307.6" r="3.0" fill="#7a7a7a"/>
<circle cx="390.0" cy="308.4" r="4.7" fill="#d41414"/>
<circle cx="393.5" cy="304.6" r="4.1" fill="#22b022"/>
<circle cx="397.0" cy="304.2" r="3.6" fill="#2626d2"/>
<circle cx="400.5" cy="300.4" r="3.0" fill="#22b022"/>
<line x1="18.6" y1="169.3" x2="30.4" y2="159.8" stroke="#2626d2" stroke-width="5" stroke-linecap="round"/>
<line x1="18.0" y1="168.2" x2="29.4" y2="158.8" stroke="#7a7af2" stroke-width="1.7" stroke-linecap="round"/>
<line x1="32.1" y1="177.1" x2="42.5" y2="168.3" stroke="#2626d2" stroke-width="5" stroke-linecap="round"/>
<line x1="31.5" y1="176.0" x2="41.5" y2="167.3" stroke="#7a7af2" stroke-width="1.7" stroke-linecap="round"/>
<line x1="65.5" y1="192.7" x2="70.5" y2="188.3" stroke="#2626d2" stroke-width="5" stroke-linecap="round"/>
<line x1="64.9" y1="191.6" x2="69.5" y2="187.3" stroke="#7a7af2" stroke-width="1.7" stroke-linecap="round"/>
<line x1="78.3" y1="192.1" x2="81.7" y2="189.0" stroke="#2626d2" stroke-width="5" stroke-linecap="round"/>
<line x1="77.7" y1="191.0" x2="80.7" y2="188.0" stroke="#7a7af2" stroke-width="1.7" stroke-linecap="round"/>
<line x1="70.6" y1="199.0" x2="73.4" y2="197.0" stroke="#2626d2" stroke-width="5" stroke-linecap="round"/>
<line x1="70.0" y1="197.9" x2="72.4" y2="196.0" stroke="#7a7af2" stroke-width="1.7" stroke-linecap="round"/>
<line x1="73.3" y1="209.7" x2="83.8" y2="200.3" stroke="#2626d2" stroke-width="5" stroke-linecap="round"/>
<line x1="72.7" y1="208.6" x2="82.8" y2="199.3" stroke="#7a7af2" stroke-width="1.7" stroke-linecap="round"/>
<line x1="74.0" y1="220.5" x2="84.5" y2="211.0" stroke="#2626d2" stroke-width="5" stroke-linecap="round"/>
<line x1="73.4" y1="219.4" x2="83.5" y2="210.0" stroke="#7a7af2" stroke-width="1.7" stroke-linecap="round"/>
<line x1="72.6" y1="230.6" x2="83.7" y2="221.6" stroke="#2626d2" stroke-width="5" stroke-linecap="round"/>
<line x1="72.0" y1="229.5" x2="82.7" y2="220.6" stroke="#7a7af2" stroke-width="1.7" stroke-linecap="round"/>
<line x1="77.0" y1="243.4" x2="88.7" y2="235.2" stroke="#2626d2" stroke-width="5" stroke-linecap="round"/>
<line x1="76.4" y1="242.3" x2="87.7" y2="234.2" stroke="#7a7af2" stroke-width="1.7" stroke-linecap="round"/>
<line x1="72.1" y1="277.7" x2="79.1" y2="271.9" stroke="#2626d2" stroke-width="5" stroke-linecap="round"/>
<line x1="71.5" y1="276.6" x2="78.1" y2="270.9" stroke="#7a7af2" stroke-width="1.7" stroke-linecap="round"/>
<line x1="89.0" y1="295.5" x2="92.1" y2="292.5" stroke="#2626d2" stroke-width="5" stroke-linecap="round"/>
<line x1="88.4" y1="294.4" x2="91.1" y2="291.5" stroke="#7a7af2" stroke-width="1.7" stroke-linecap="round"/>
<line x1="107.1" y1="285.8" x2="111.0" y2="283.2" stroke="#2626d2" stroke-width="5" stroke-linecap="round"/>
<line x1="106.5" y1="284.7" x2="110.0" y2="282.2" stroke="#7a7af2" stroke-width="1.7" stroke-linecap="round"/>
<line x1="99.1" y1="320.5" x2="109.5" y2="311.7" stroke="#2626d2" stroke-width="5" stroke-linecap="round"/>
<line x1="98.5" y1="319.4" x2="108.5" y2="310.7" stroke="#7a7af2" stroke-width="1.7" stroke-linecap="round"/>
<line x1="101.5" y1="337.2" x2="111.9" y2="327.7" stroke="#2626d2" stroke-width="5" stroke-linecap="round"/>
<line x1="100.9" y1="336.1" x2="110.9" y2="326.7" stroke="#7a7af2" stroke-width="1.7" stroke-linecap="round"/>
<line x1="114.2" y1="354.3" x2="125.4" y2="344.8" stroke="#2626d2" stroke-width="5" stroke-linecap="round"/>
<line x1="113.6" y1="353.2" x2="124.4" y2="343.8" stroke="#7a7af2" stroke-width="1.7" stroke-linecap="round"/>
<line x1="101.4" y1="398.4" x2="111.9" y2="388.9" stroke="#2626d2" stroke-width="5" stroke-linecap="round"/>
<line x1="100.8" y1="397.3" x2="110.9" y2="387.9" stroke="#7a7af2" stroke-width="1.7" stroke-linecap="round"/>
<line x1="111.3" y1="406.9" x2="120.4" y2="398.8" stroke="#2626d2" stroke-width="5" stroke-linecap="round"/>
<line x1="110.7" y1="405.8" x2="119.4" y2="397.8" stroke="#7a7af2" stroke-width="1.7" stroke-linecap="round"/>
<line x1="119.2" y1="417.6" x2="129.7" y2="408.1" stroke="#2626d2" stroke-width="5" stroke-linecap="round"/>
<line x1="118.6" y1="416.5" x2="128.7" y2="407.1" stroke="#7a7af2" stroke-width="1.7" stroke-linecap="round"/>
<line x1="199.7" y1="268.9" x2="204.3" y2="266.1" stroke="#2626d2" stroke-width="5" stroke-linecap="round"/>
<line x1="199.1" y1="267.8" x2="203.3" y2="265.1" stroke="#7a7af2" stroke-width="1.7" stroke-linecap="round"/>
<line x1="267.5" y1="298.7" x2="271.5" y2="295.3" stroke="#2626d2" stroke-width="5" stroke-linecap="round"/>
<line x1="266.9" y1="297.6" x2="270.5" y2="294.3" stroke="#7a7af2" stroke-width="1.7" stroke-linecap="round"/>
<line x1="282.6" y1="297.5" x2="287.4" y2="293.5" stroke="#2626d2" stroke-width="5" stroke-linecap="round"/>
<line x1="282.0" y1="296.4" x2="286.4" y2="292.5" stroke="#7a7af2" stroke-width="1.7" stroke-linecap="round"/>
<line x1="311.4" y1="291.6" x2="316.6" y2="286.4" stroke="#2626d2" stroke-width="5" stroke-linecap="round"/>
<line x1="310.8" y1="290.5" x2="315.6" y2="285.4" stroke="#7a7af2" stroke-width="1.7" stroke-linecap="round"/>
<line x1="317.4" y1="302.6" x2="320.6" y2="299.4" stroke="#2626d2" stroke-width="5" stroke-linecap="round"/>
<line x1="316.8" y1="301.5" x2="319.6" y2="298.4" stroke="#7a7af2" stroke-width="1.7" stroke-linecap="round"/>
<line x1="325.6" y1="305.5" x2="329.4" y2="302.5" stroke="#2626d2" stroke-width="5" stroke-linecap="round"/>
<line x1="325.0" y1="304.4" x2="328.4" y2="301.5" stroke="#7a7af2" stroke-width="1.7" stroke-linecap="round"/>
<line x1="340.5" y1="311.6" x2="350.5" y2="302.4" stroke="#2626d2" stroke-width="5" stroke-linecap="round"/>
<line x1="339.9" y1="310.5" x2="349.5" y2="301.4" stroke="#7a7af2" stroke-width="1.7" stroke-linecap="round"/>
<line x1="352.7" y1="317.6" x2="357.3" y2="314.4" stroke="#2626d2" stroke-width="5" stroke-linecap="round"/>
<line x1="352.1" y1="316.5" x2="356.3" y2="313.4" stroke="#7a7af2" stroke-width="1.7" stroke-linecap="round"/>
<line x1="371.4" y1="308.6" x2="374.6" y2="305.4" stroke="#2626d2" stroke-width="5" stroke-linecap="round"/>
<line x1="370.8" y1="307.5" x2="373.6" y2="304.4" stroke="#7a7af2" stroke-width="1.7" stroke-linecap="round"/>
<line x1="120.0" y1="281.9" x2="125.0" y2="277.6" stroke="#2626d2" stroke-width="5" stroke-linecap="round"/>
<line x1="119.4" y1="280.8" x2="124.0" y2="276.6" stroke="#7a7af2" stroke-width="1.7" stroke-linecap="round"/>
<line x1="146.3" y1="282.9" x2="151.2" y2="278.6" stroke="#2626d2" stroke-width="5" stroke-linecap="round"/>
<line x1="145.7" y1="281.8" x2="150.2" y2="277.6" stroke="#7a7af2" stroke-width="1.7" stroke-linecap="round"/>
<line x1="172.5" y1="283.2" x2="177.5" y2="278.8" stroke="#2626d2" stroke-width="5" stroke-linecap="round"/>
<line x1="171.9" y1="282.1" x2="176.5" y2="277.8" stroke="#7a7af2" stroke-width="1.7" stroke-linecap="round"/>
<line x1="199.5" y1="283.4" x2="204.5" y2="279.1" stroke="#2626d2" stroke-width="5" stroke-linecap="round"/>
<line x1="198.9" y1="282.3" x2="203.5" y2="278.1" stroke="#7a7af2" stroke-width="1.7" stroke-linecap="round"/>
<line x1="227.5" y1="287.7" x2="232.5" y2="283.3" stroke="#2626d2" stroke-width="5" stroke-linecap="round"/>
<line x1="226.9" y1="286.6" x2="231.5" y2="282.3" stroke="#7a7af2" stroke-width="1.7" stroke-linecap="round"/>
<line x1="251.5" y1="298.3" x2="256.5" y2="293.9" stroke="#2626d2" stroke-width="5" stroke-linecap="round"/>
<line x1="250.9" y1="297.2" x2="255.5" y2="292.9" stroke="#7a7af2" stroke-width="1.7" stroke-linecap="round"/>
<circle cx="24.9" cy="166.3" r="4.6" fill="#d41414"/>
<circle cx="23.0" cy="161.0" r="2.6" fill="#d41414"/>
<circle cx="104.0" cy="317.5" r="4.2" fill="#d41414"/>
<circle cx="80.6" cy="257.0" r="4.6" fill="#22b022"/>
<circle cx="62.6" cy="190.5" r="3.2" fill="#d41414"/>
<circle cx="68.3" cy="191.2" r="4.0" fill="#22b022"/>
<circle cx="78.2" cy="226.0" r="4.0" fill="#22b022"/>
<circle cx="79.0" cy="232.5" r="3.2" fill="#d41414"/>
<circle cx="124.0" cy="411.0" r="3.4" fill="#d41414"/>
<circle cx="44.8" cy="180.6" r="3" fill="#000"/>
</svg>
<div class="a lb bb" style="left:34px;top:157px">Jihlava 1.st.kolej</div>
<div class="a lb bb" style="left:34px;top:157px">Jihlava 12.st.kolej</div>
<div class="a lb bb" style="left:35px;top:157px">Jihlava 3.st.kolej</div>
<div class="a lb" style="left:45px;top:166px">Maly Beranov</div>
<div class="a lb bb" style="left:76px;top:184px">Luka nad Jihlavou 1.st.kolej</div>
<div class="a lb bb" style="left:76px;top:184px">Luka nad Jihlavou 2.st.kolej</div>
<div class="a lb" style="left:84px;top:190px">Bitovcice</div>
<div class="a lb" style="left:86px;top:199px">Primelkov</div>
<div class="a lb" style="left:87px;top:209px">Dolni Smrcne</div>
<div class="a lb" style="left:85px;top:219px">Bransouze 1.st.kolej</div>
<div class="a lb" style="left:85px;top:219px">Bransouze 5.st.kolej</div>
<div class="a lb" style="left:89px;top:233px">Cichov</div>
<div class="a lb bb" style="left:90px;top:252px">Okrisky 1.st.kolej</div>
<div class="a lb bb" style="left:90px;top:252px">Okrisky 12.st.kolej</div>
<div class="a lb bb" style="left:91px;top:252px">Okrisky 3.st.kolej</div>
<div class="a lb" style="left:92px;top:266px">Hvezdonovice</div>
<div class="a lb" style="left:104px;top:285px">Starec 1.st.kolej</div>
<div class="a lb" style="left:104px;top:285px">Starec 3.st.kolej</div>
<div class="a lb" style="left:100px;top:276px">Trebic Borovina</div>
<div class="a lb" style="left:114px;top:309px">Kojetice na Morave - 1.st.kolej</div>
<div class="a lb" style="left:114px;top:309px">Kojetice na Morave - 3.st.kolej</div>
<div class="a lb" style="left:115px;top:325px">Sebkovice</div>
<div class="a lb bb" style="left:128px;top:343px">Jaromerice nad Rokytnou - 1.st.kolej</div>
<div class="a lb bb" style="left:128px;top:343px">Jaromerice nad Rokytnou - 2.st.kolej</div>
<div class="a lb bb" style="left:107px;top:364px">M.Budejovice - 1.st.kolej</div>
<div class="a lb bb" style="left:107px;top:364px">M.Budejovice - 2.st.kolej</div>
<div class="a lb bb" style="left:107px;top:364px">N.Budejovice - 0.st.kolej</div>
<div class="a lb" style="left:115px;top:387px">Vesce</div>
<div class="a lb" style="left:124px;top:396px">Blizkovice</div>
<div class="a lb bb" style="left:133px;top:407px">Greslove Myto - 1.st.kolej</div>
<div class="a lb bb" style="left:133px;top:407px">Greslove Myto - 3.st.kolej</div>
<div class="a lb bb" style="left:205px;top:265px">Studenec 1.stanicni kolej</div>
<div class="a lb bb" style="left:206px;top:265px">Studenec 2.stanicni kolej</div>
<div class="a lb" style="left:118px;top:275px">Trebic 1.st.kolej</div>
<div class="a lb" style="left:119px;top:275px">Trebic 2.st.kolej</div>
<div class="a lb" style="left:121px;top:276px">Trebic 3.st.kolej</div>
<div class="a lb" style="left:215px;top:275px">Vladislav nad Oslavou 1.st.kolej</div>
<div class="a lb" style="left:180px;top:276px">Vladislav 2.st.kolej</div>
<div class="a lb" style="left:286px;top:284px">Kralice nad Oslavou 1.st.kolej</div>
<div class="a lb" style="left:235px;top:285px">Namest 2.st.kolej</div>
<div class="a lb" style="left:300px;top:289px">Rapotice 1.st.kolej</div>
<div class="a lb" style="left:301px;top:290px">Rapotice 2.st.kolej</div>
<div class="a lb" style="left:335px;top:295px">Vysoke Popovice 1.st.kolej</div>
<div class="a lb bb" style="left:409px;top:284px">Zastavka u Brna 1.st.kolej</div>
<div class="a lb bb" style="left:410px;top:284px">Zastavka u Brna 2.st.kolej</div>
<div class="a lb bb" style="left:416px;top:284px">Rosice u Brna 3.st.kolej</div>
<div class="a lb" style="left:423px;top:285px">Rosice u Brna 1.st.kolej</div>
<div class="a lb bb" style="left:375px;top:296px">Tetcice 1.st.kolej</div>
<div class="a lb bb" style="left:376px;top:297px">Tetcice 2.st.kolej</div>
<div class="a lb bb" style="left:465px;top:297px">Horni Herspice 1.st.kolej</div>
<div class="a lb bb" style="left:465px;top:297px">Horni Herspice 3.st.kolej</div>
<div class="a lb bb" style="left:466px;top:297px">Horni Herspice 5.st.kolej</div>
<div class="a lb bb" style="left:341px;top:305px">Strelice dolni 1.st.kolej</div>
<div class="a lb bb" style="left:342px;top:305px">Strelice dolni 2.st.kolej</div>
<div class="a lb" style="left:403px;top:303px">Troubsko 1.st.kolej</div>
</div>
<div class="a" style="left:249px;top:29px;width:323px;height:121px;border-radius:8px 8px 4px 4px;background:#1d448f"></div>
<div class="a" style="left:249px;top:29px;width:323px;height:22px;border-radius:8px 8px 0 0;background:linear-gradient(#5a92e6 0,#3f7ad6 9px,#0b48b8 11px,#1c5ccb 22px)"></div>
<div class="a sans" style="left:249px;top:33px;width:323px;text-align:center;color:#fff;font-weight:bold;font-size:12px;line-height:16px">Výběr tratě</div>
<div class="a" style="left:251px;top:51px;width:319px;height:97px;background:linear-gradient(#eaf3fc,#f3f4fb 8px);border-radius:1px 1px 2px 2px"></div>
<div class="inp" style="left:264px;top:66px;width:294px;height:20px;line-height:17px;padding-left:1px;">Bratislava-Sturovo-Komarno</div>
<div class="dd" style="left:542px;top:68px;height:17px"></div>
<div class="a" style="left:263px;top:87px;width:296px;height:156px;background:#fff;border:1px solid #000"></div>
<div class="a" style="left:264px;top:88px;width:294px;height:14px;background:#2f6ac8;color:#fff;line-height:16px;padding-left:2px">Bratislava-Sturovo-Komarno</div>
<div class="a" style="left:264px;top:102px;width:294px;height:14px;line-height:16px;padding-left:2px">Cr_090</div>
<div class="a" style="left:264px;top:116px;width:294px;height:14px;line-height:16px;padding-left:2px">CR_310</div>
<div class="a" style="left:264px;top:130px;width:294px;height:14px;line-height:16px;padding-left:2px">GR Bayerische Waldbahn</div>
<div class="a" style="left:264px;top:144px;width:294px;height:14px;line-height:16px;padding-left:2px">Jihlava - Brno</div>
<div class="a" style="left:264px;top:158px;width:294px;height:14px;line-height:16px;padding-left:2px">Kievský chod</div>
<div class="a" style="left:264px;top:172px;width:294px;height:14px;line-height:16px;padding-left:2px">Trat 321</div>
<div class="a" style="left:264px;top:186px;width:294px;height:14px;line-height:16px;padding-left:2px">Trat_183</div>
<div class="a" style="left:264px;top:200px;width:294px;height:14px;line-height:16px;padding-left:2px">Tutorial Route</div>
<div class="a" style="left:264px;top:214px;width:294px;height:14px;line-height:16px;padding-left:2px">Vysocina_old</div>
<div class="a" style="left:264px;top:228px;width:294px;height:14px;line-height:16px;padding-left:2px">ZSR169-500</div>
</body></html>
